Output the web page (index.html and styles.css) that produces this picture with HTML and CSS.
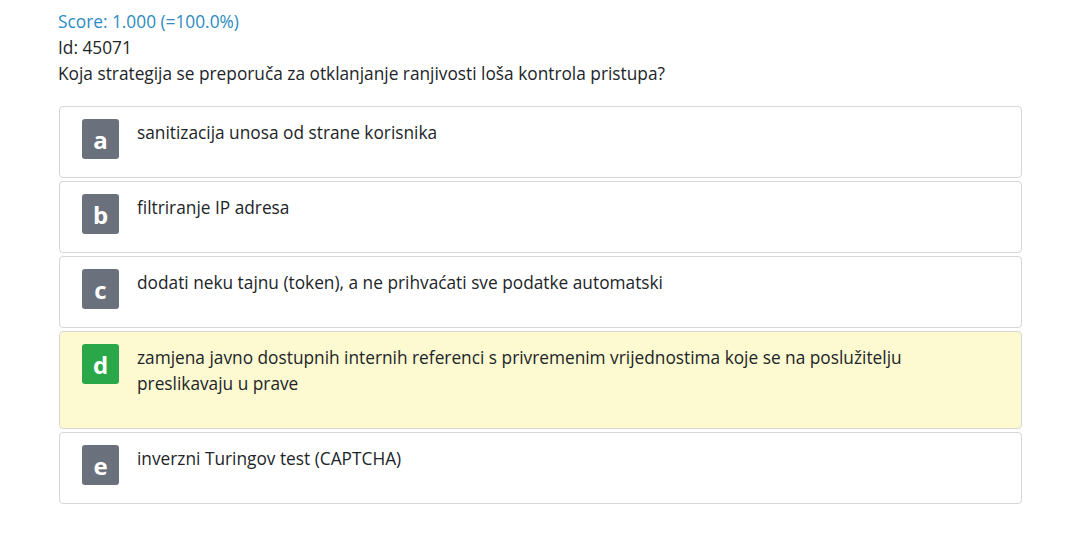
FILE: index.html
```html
<!DOCTYPE html>
<html>
<head>
<meta charset="utf-8">
<link rel="stylesheet" href="styles.css">
</head>
<body>
<div class="page">
  <div class="meta">
    <div class="score">Score: 1.000 (=100.0%)</div>
    <div class="id">Id: 45071</div>
    <div class="question">Koja strategija se preporuča za otklanjanje ranjivosti loša kontrola pristupa?</div>
  </div>
  <div class="answers">
    <div class="answer">
      <div class="badge">a</div>
      <div class="text">sanitizacija unosa od strane korisnika</div>
    </div>
    <div class="answer">
      <div class="badge">b</div>
      <div class="text">filtriranje IP adresa</div>
    </div>
    <div class="answer">
      <div class="badge">c</div>
      <div class="text">dodati neku tajnu (token), a ne prihvaćati sve podatke automatski</div>
    </div>
    <div class="answer correct">
      <div class="badge">d</div>
      <div class="text">zamjena javno dostupnih internih referenci s privremenim vrijednostima koje se na poslužitelju preslikavaju u prave</div>
    </div>
    <div class="answer">
      <div class="badge">e</div>
      <div class="text">inverzni Turingov test (CAPTCHA)</div>
    </div>
  </div>
</div>
</body>
</html>
```
FILE: styles.css
```css
html, body {
  margin: 0;
  padding: 0;
  background: #ffffff;
}
body {
  font-family: "Open Sans", "Noto Sans", sans-serif;
  font-size: 17.3px;
  color: #212529;
}
.page {
  padding: 9px 0 0 58px;
  width: 964px;
}
.meta {
  line-height: 26px;
}
.score {
  color: #2b8bc2;
}
.answers {
  margin-top: 19px;
  margin-left: 1px;
  display: flex;
  flex-direction: column;
  gap: 3px;
}
.answer {
  display: flex;
  align-items: flex-start;
  border: 1px solid #d6d6d6;
  border-radius: 4px;
  padding: 12px 22px 18px 22px;
  background: #ffffff;
}
.answer.correct {
  background: #fdf9d0;
}
.badge {
  flex: 0 0 37px;
  height: 40px;
  border-radius: 3px;
  background: #6b717c;
  color: #ffffff;
  font-weight: 700;
  font-size: 24px;
  padding-top: 1px;
  box-sizing: border-box;
  display: flex;
  align-items: center;
  justify-content: center;
}
.correct .badge {
  background: #2aa748;
}
.text {
  margin-left: 18px;
  line-height: 26px;
  padding-top: 1px;
  padding-bottom: 13px;
  max-width: 800px;
}
```
